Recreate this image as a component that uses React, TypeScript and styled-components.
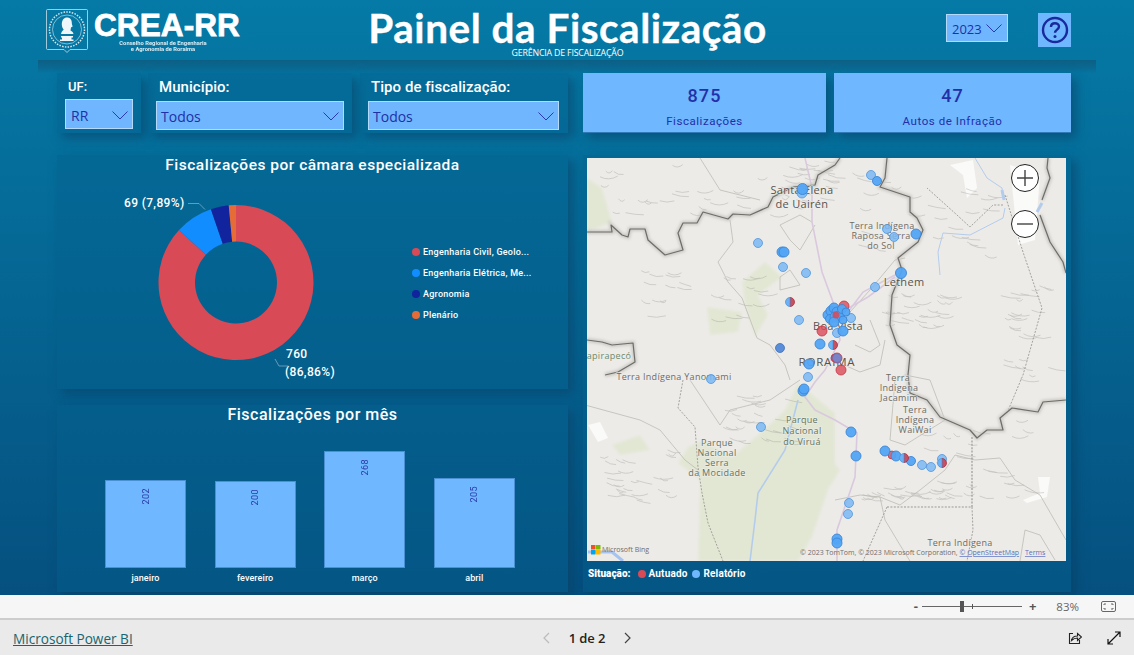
import React from "react";
import styled, { createGlobalStyle } from "styled-components";

const Global = createGlobalStyle`
  html, body { margin: 0; padding: 0; width: 1134px; height: 655px; overflow: hidden; background: #f6f6f6; }
  * { box-sizing: border-box; }
  body { font-family: Roboto, "Liberation Sans", sans-serif; }
`;

const Page = styled.div`width:1134px;height:655px;display:flex;flex-direction:column;`;
const Canvas = styled.main`height:595px;background:linear-gradient(180deg,#057aa6 0%,#05507f 100%);overflow:hidden;`;
const Header = styled.header`height:60px;display:flex;align-items:flex-start;padding-left:46px;`;
const Logo = styled.div`width:195px;height:60px;display:flex;align-items:flex-start;padding-top:9px;`;
const Brand = styled.div`margin-left:6px;margin-top:2px;width:147px;color:#fff;display:flex;flex-direction:column;`;
const BrandName = styled.div`font:900 31.5px/28px "Liberation Sans",sans-serif;letter-spacing:.1px;white-space:nowrap;-webkit-text-stroke:.8px #fff;margin-bottom:1px;`;
const BrandSub = styled.div`font:700 5.8px/6px Roboto,sans-serif;white-space:nowrap;opacity:.85;text-align:center;margin-right:9px;`;
const TitleBlock = styled.div`width:397px;margin-left:128px;display:flex;flex-direction:column;align-items:center;color:#fff;`;
const Title = styled.h1`margin:0;font:700 40.5px/47px Lato,"Open Sans",sans-serif;letter-spacing:.52px;-webkit-text-stroke:.35px #fff;white-space:nowrap;margin-top:4px;height:43px;`;
const Subtitle = styled.div`font:400 8.8px/11px "Open Sans",sans-serif;letter-spacing:-.18px;white-space:nowrap;margin-top:1px;`;
const YearSelect = styled.div`margin-left:180px;margin-top:14px;width:62px;height:28px;background:#6fb6ff;border:1px solid #b5d9fb;display:flex;align-items:center;justify-content:space-between;padding:1px 5px 0 5px;color:#2230a6;font:400 13px "Open Sans",sans-serif;`;
const HelpButton = styled.div`margin-left:30px;margin-top:13px;width:33px;height:34px;background:#6fb7ff;display:flex;align-items:center;justify-content:center;`;
const HeaderStrip = styled.div`height:13px;margin:0 38px;background:linear-gradient(180deg,#0c5f85 0%,#0a6a93 65%,rgba(6,110,150,0) 100%);`;
const Body = styled.div`display:grid;grid-template-columns:511px 488px;column-gap:15px;padding-left:57px;`;
const Column = styled.div`display:flex;flex-direction:column;`;
const FilterRow = styled.div`display:flex;height:60px;margin-bottom:22px;`;
const Panel = styled.section`background:rgba(5,95,140,.42);box-shadow:5px 5px 10px rgba(9,62,98,.55);`;
const FilterPanel = styled(Panel)<{ $w: number; $ml: number; $pl: number; $pr: number }>`
  width:${p => p.$w}px;margin-left:${p => p.$ml}px;padding:0 ${p => p.$pr}px 0 ${p => p.$pl}px;display:flex;flex-direction:column;`;
const FilterLabel = styled.label<{ $h: number; $fs: number }>`
  height:${p => p.$h}px;padding:5px 0 0 3px;color:#fff;font:500 ${p => p.$fs}px/18px Roboto,sans-serif;letter-spacing:.05px;white-space:nowrap;`;
const Select = styled.div<{ $h: number; $fs: number; $pl?: number }>`
  height:${p => p.$h}px;background:#6fb6ff;border:1px solid #b5d9fb;display:flex;align-items:center;justify-content:space-between;padding:2px 4px 0 ${p => p.$pl ?? 4}px;color:#2230a6;font:400 ${p => p.$fs}px "Open Sans",sans-serif;`;
const KpiRow = styled.div`display:flex;gap:8px;height:60px;margin-bottom:22px;`;
const Kpi = styled.div<{ $w: number }>`width:${p => p.$w}px;height:60px;background:#6fb7ff;border-bottom:1px solid #2f79b5;box-shadow:5px 5px 10px rgba(9,62,98,.55);display:flex;flex-direction:column;align-items:center;color:#2330a8;`;
const KpiValue = styled.div`font:500 18px/21px Roboto,sans-serif;letter-spacing:1.1px;margin-top:12px;`;
const KpiLabel = styled.div`font:400 11.5px/14px Roboto,sans-serif;letter-spacing:.55px;margin-top:8px;`;
const ChartPanel = styled(Panel)<{ $h: number; $mt?: number }>`height:${p => p.$h}px;margin-top:${p => p.$mt ?? 0}px;display:flex;flex-direction:column;`;
const ChartTitle = styled.h2<{ $fs: number }>`margin:0;height:20px;text-align:center;color:#fff;font:500 ${p => p.$fs}px/20px Roboto,sans-serif;letter-spacing:.5px;`;
const DonutBody = styled.div`display:flex;`;
const DonutArt = styled.svg`flex:none;`;
const Legend = styled.ul`list-style:none;margin:66px 0 0 0;padding:0;display:flex;flex-direction:column;`;
const LegendItem = styled.li`height:21px;display:flex;align-items:center;gap:3px;color:#fff;font:500 9px/12px Roboto,sans-serif;letter-spacing:.25px;white-space:nowrap;`;
const Dot = styled.span<{ $c: string }>`width:8px;height:8px;border-radius:50%;background:${p => p.$c};flex:none;`;
const BarPlot = styled.div`display:flex;gap:28.6px;padding-left:48px;height:133px;align-items:flex-end;margin-top:10px;`;
const BarWrap = styled.div`width:81px;display:flex;flex-direction:column;`;
const Bar = styled.div`width:81px;background:#6fb7ff;border:1px solid #4b90d3;display:flex;justify-content:center;padding-top:7px;`;
const BarValue = styled.span`writing-mode:vertical-rl;transform:rotate(180deg);color:#2a3aa8;font:400 9px/10px Roboto,sans-serif;letter-spacing:.4px;height:max-content;`;
const AxisRow = styled.div`display:flex;gap:28.6px;padding-left:48px;margin-top:4px;`;
const AxisLabel = styled.div`width:81px;text-align:center;color:#fff;font:500 9px/12px Roboto,sans-serif;letter-spacing:.1px;`;
const MapPanel = styled(Panel)`height:437px;padding:3px 5px 0 4px;`;
const MapFrame = styled.div`position:relative;width:479px;height:403px;overflow:hidden;background:#edebe8;`;
const ZoomCtl = styled.div<{ $top: number }>`position:absolute;left:424px;top:${p => p.$top}px;width:28px;height:28px;border-radius:50%;background:#fff;border:1px solid #222;display:flex;align-items:center;justify-content:center;`;
const MapLegend = styled.div`display:flex;align-items:center;height:26px;padding-left:1px;color:#fff;font:700 10px/12px Roboto,sans-serif;letter-spacing:.15px;`;
const MapLegendKey = styled.span`margin-right:7px;font-weight:900;letter-spacing:0;`;
const MapLegendItem = styled.span`display:flex;align-items:center;gap:3px;margin-right:5px;`;
const ZoomBar = styled.div`height:23px;background:#f6f6f6;display:flex;align-items:center;justify-content:flex-end;padding-right:18px;color:#666;`;
const SliderSign = styled.span`font:700 13px/13px "Open Sans",sans-serif;color:#555;`;
const Slider = styled.div`position:relative;width:100px;height:1px;background:#666;margin:0 7px 0 4px;`;
const Thumb = styled.span`position:absolute;left:38px;top:-5px;width:4px;height:11px;background:#555;`;
const Tick = styled.span`position:absolute;left:50px;top:-2px;width:1px;height:5px;background:#555;`;
const Percent = styled.span`margin:0 22px 0 20px;font:400 11.5px "Open Sans",sans-serif;color:#666;`;
const BottomBar = styled.footer`height:37px;background:#eaeaea;border-top:2px solid #cdcdcd;display:grid;grid-template-columns:1fr auto 1fr;align-items:center;padding:1px 13px 0 13px;`;
const PbiLink = styled.a`font:400 13.6px "Open Sans",sans-serif;letter-spacing:0;color:#17666f;text-decoration:underline;`;
const Pager = styled.div`display:flex;align-items:center;gap:19px;margin-left:40px;font:600 13px "Open Sans",sans-serif;color:#222;letter-spacing:-.1px;`;
const Actions = styled.div`display:flex;justify-content:flex-end;gap:25px;align-items:center;`;
const ChartNum = styled.text`font:500 12px Roboto,sans-serif;fill:#fff;letter-spacing:.35px;`;
const MapText = styled.text`font:400 7px "Open Sans",sans-serif;fill:#6f6e6a;`;
const MapLink = styled.tspan`fill:#5a6fc0;text-decoration:underline;`;
const MapSvg = styled.svg`display:block;`;
const MapLabel = styled.text<{ $fs?: number; $c?: string; $ls?: number }>`
  font: 400 ${p => p.$fs ?? 9}px "Open Sans", sans-serif;
  fill: ${p => p.$c ?? "#6d6b64"};
  letter-spacing: ${p => p.$ls ?? 0.3}px;
  text-anchor: middle;
  paint-order: stroke;
  stroke: rgba(240,238,235,.7);
  stroke-width: 1.5px;
`;

const Chevron = ({ w = 16, h = 9, c = "#2a3ab0" }: { w?: number; h?: number; c?: string }) => (
  <svg width={w} height={h} viewBox="0 0 16 9"><path d="M.5.5 8 8 15.5.5" fill="none" stroke={c} strokeWidth="1" /></svg>
);

const polar = (cx: number, cy: number, r: number, f: number) => {
  const a = f * 2 * Math.PI;
  return [cx + r * Math.sin(a), cy - r * Math.cos(a)];
};
const arc = (from: number, to: number) => {
  const cx = 179, cy = 107.5, R = 77.5, r = 41;
  const [a, b] = polar(cx, cy, R, from), [c, d] = polar(cx, cy, R, to), [e, f] = polar(cx, cy, r, to), [g, h] = polar(cx, cy, r, from);
  const l = to - from > 0.5 ? 1 : 0;
  return `M${a} ${b}A${R} ${R} 0 ${l} 1 ${c} ${d}L${e} ${f}A${r} ${r} 0 ${l} 0 ${g} ${h}Z`;
};

const legend = [
  ["#d84a56", "Engenharia Civil, Geolo..."],
  ["#118dff", "Engenharia Elétrica, Me..."],
  ["#12239e", "Agronomia"],
  ["#e66c37", "Plenário"],
];
const bars = [
  ["janeiro", 202, 88], ["fevereiro", 200, 87], ["março", 268, 117], ["abril", 205, 90],
] as const;

type M = [number, number, number?, number?];
const light: M[] = [[802, 193, 5], [758, 243], [783, 267], [806, 273], [799, 320], [871, 175], [887, 229], [894, 237], [875, 287], [851, 318], [837, 333], [711, 379], [808, 377], [761, 427], [922, 465], [931, 467], [942, 459], [849, 503], [848, 514]];
const solid: M[] = [[782, 252, 5], [784, 252, 5], [820, 344, 5], [809, 364, 5], [877, 181, 4.5], [916, 234, 5], [901, 273, 5.5], [843, 331, 5], [851, 432, 5], [856, 456, 5], [885, 451, 5], [896, 456, 5], [911, 461, 4.5], [837, 539, 5], [837, 543, 5], [803, 391, 5], [804, 389, 5], [802.5, 189, 5.5]];
const cluster: M[] = [[828, 315, 5], [831, 311, 5], [834, 308, 5], [837, 312, 5], [830, 319, 4.5], [835, 317, 5], [839, 316, 5], [842, 309, 4.5], [834, 322, 5], [846, 312, 4], [843, 320, 4]];
const red: M[] = [[822, 331, 5], [844, 306, 5], [837, 316, 5], [835, 358, 4], [837, 358, 5], [841, 370, 5], [892, 455, 4]];
const half: M[] = [[790, 302], [833, 345], [904, 458], [942, 463]];

const shade: string[] = (() => {
  const res: string[] = [];
  let s = 17;
  const rnd = () => (s = (s * 16807) % 2147483647) / 2147483647;
  const zones = [[600, 165, 190, 50], [640, 270, 120, 50], [850, 170, 140, 90], [880, 290, 70, 40], [900, 420, 130, 80], [860, 480, 90, 20], [720, 395, 70, 50], [600, 450, 70, 50], [1000, 280, 50, 100], [780, 160, 50, 50]];
  zones.forEach(([x, y, w, h]) => {
    for (let i = 0; i < 26; i++) {
      const a = x + rnd() * w, b = y + rnd() * h, l = 6 + rnd() * 14;
      res.push(`M${a.toFixed(1)} ${b.toFixed(1)}q${(l / 2).toFixed(1)} ${(2 + rnd() * 3).toFixed(1)} ${l.toFixed(1)} ${(rnd() * 5 - 1).toFixed(1)}`);
    }
  });
  return res;
})();

const borderA = "M587 232 612 232 611 225 622 235 628 237 630 229 645 229 648 240 665 255 683 250 678 233 683 223 697 223 703 212 728 219 733 214 750 215 768 207 773 197 793 187 815 185 818 175 835 165 840 158";
const borderB = "M887 158 885 178 880 187 910 197 910 212 917 218 923 230 918 242 898 258 902 270 892 295 890 325 897 345 910 355 908 375 910 393 927 400 940 417 970 430 977 438 987 430 1003 430 1000 418 1012 408 1038 412 1043 402 1066 400";
const borderC = "M1048 158 1047 168 1050 178 1042 200 M1040 215 1050 242 1063 262 1066 273";
const borderD = "M587 340 602 342 612 345 633 343 635 362 618 372 605 375";

const MapArt = () => (
  <MapSvg width="479" height="403" viewBox="587 158 479 403">
    <defs>
      <filter id="soft"><feGaussianBlur stdDeviation="1.4" /></filter>
      <filter id="soft2"><feGaussianBlur stdDeviation=".5" /></filter>
      <filter id="soft3"><feGaussianBlur stdDeviation="1.6" /></filter>
    </defs>
    <rect x="587" y="158" width="479" height="403" fill="#edebe8" />
    <g fill="#e2e7d4" filter="url(#soft)">
      <path d="M798 383 835 413 835 470 812 537 798 561 698 561 700 480 678 463 688 447 702 440 732 457 758 435 785 410Z" />
      <path d="M587 178 602 188 612 222 587 232Z" />
      <path d="M707 307 742 312 738 332 710 335Z" />
      <path d="M742 282 765 262 782 277 758 295 768 315 755 337 745 305Z" />
      <path d="M830 457 840 470 830 487Z" />
      <path d="M612 445 640 435 650 450 620 455Z" />
    </g>
    <g fill="#fafaf9" filter="url(#soft2)">
      <path d="M950 165 973 160 977 188 967 198 963 175Z" />
      <path d="M1023 500 1040 493 1038 477 1050 477 1047 497 1027 503Z" />
      <path d="M1010 165 1040 175 1035 240 1018 245Z" />
      <path d="M588 425 600 422 608 438 598 442Z" />
    </g>
    <g fill="none" stroke="#8d8c86" strokeWidth=".7" opacity=".45" filter="url(#soft2)">
      {shade.map((d, i) => <path key={i} d={d} />)}
    </g>
    <g fill="none" stroke="#bcbbb3" strokeWidth=".8">
      <path d="M730 220 733 242 718 262 728 282 742 298 757 338 770 345 785 365 790 380" />
      <path d="M812 222 800 215 780 225 790 240 800 250 815 225" />
      <path d="M780 277 790 270 800 285 780 290Z" />
      <path d="M850 312 870 290 895 260 905 258" />
      <path d="M870 320 880 345 870 352 855 345" />
      <path d="M895 380 905 375 930 380 945 420 905 445 890 440Z" />
      <path d="M880 497 900 505 920 490 945 470 955 455 975 460 1000 458 1015 480 1040 495 1066 540" />
      <path d="M835 500 860 495 880 497 885 520 900 545 910 561" />
      <path d="M1020 561 1025 530 1040 535 1055 560" />
      <path d="M585 405 640 420 660 430 685 460 698 470" />
      <path d="M690 380 720 425 730 410 770 400 800 380" />
      <path d="M700 158 720 190 760 200" />
      <path d="M835 361 860 372 880 365 885 340" />
    </g>
    <g fill="none" stroke="#d9c9de" strokeWidth="1.6">
      <path d="M805 158 812 188 812 222 822 272 833 302 840 340 825 370 815 382 805 397 815 410 835 420 857 433 855 477 837 530 837 561" />
      <path d="M848 312 863 292 895 275" />
      <path d="M845 310 868 297 895 277" />
    </g>
    <g fill="none" stroke="#b4ccec" strokeWidth="1">
      <path d="M975 158 987 178 1002 188 1003 198" />
      <path d="M943 233 970 235 1003 218 1005 208" />
      <path d="M943 233 938 252 940 275" />
      <path d="M1002 190 1004 200" strokeWidth="3" />
      <path d="M1042 203 1037 212" strokeWidth="3" />
      <path d="M798 400 785 450 758 493 755 520 750 561" strokeWidth="1.6" />
      <path d="M588 552 612 552 623 561" strokeWidth="3" stroke="#a7c4f0" />
    </g>
    <g fill="none" stroke="#9a9993" strokeWidth=".9" strokeDasharray="2 1.4">
      <path d="M683 380 678 408 695 427 698 467 702 493 708 523 723 561" />
      <path d="M887 507 972 507 972 437" strokeWidth="1.2" />
      <path d="M972 507 973 530 967 561" />
      <path d="M887 507 863 561" />
      <path d="M1003 205 993 205 970 227 957 215 927 188" />
      <path d="M1005 195 1023 252 1042 308 1023 375 1007 413" />
    </g>
    <g fill="none" stroke="#c9c8c2" strokeWidth="4" filter="url(#soft3)">
      <path d={borderA} /><path d={borderB} /><path d={borderC} /><path d={borderD} />
    </g>
    <g fill="none" stroke="#6e6d69" strokeWidth="1.2" strokeLinejoin="round">
      <path d={borderA} /><path d={borderB} /><path d={borderC} /><path d={borderD} />
    </g>

    <MapLabel x="802" y="194" $fs={11} $c="#55534e">Santa Elena</MapLabel>
    <MapLabel x="802" y="208" $fs={11} $c="#55534e">de Uairén</MapLabel>
    <MapLabel x="904" y="286" $fs={11} $c="#55534e">Lethem</MapLabel>
    <MapLabel x="882" y="229">Terra Indígena</MapLabel>
    <MapLabel x="881" y="239">Raposa Serra</MapLabel>
    <MapLabel x="881" y="249">do Sol</MapLabel>
    <MapLabel x="838" y="330" $fs={11} $c="#55534e">Boa Vista</MapLabel>
    <MapLabel x="827" y="366" $fs={11.5} $c="#55534e" $ls={.8}>RORAIMA</MapLabel>
    <MapLabel x="609" y="359" $c="#6a8a6e">apirapecó</MapLabel>
    <MapLabel x="674" y="380">Terra Indígena Yanomami</MapLabel>
    <MapLabel x="802" y="423" $c="#5f7560">Parque</MapLabel>
    <MapLabel x="802" y="434" $c="#5f7560">Nacional</MapLabel>
    <MapLabel x="802" y="445" $c="#5f7560">do Viruá</MapLabel>
    <MapLabel x="717" y="446" $c="#5f7560">Parque</MapLabel>
    <MapLabel x="717" y="456" $c="#5f7560">Nacional</MapLabel>
    <MapLabel x="717" y="466" $c="#5f7560">Serra</MapLabel>
    <MapLabel x="717" y="476" $c="#5f7560">da Mocidade</MapLabel>
    <MapLabel x="898" y="381">Terra</MapLabel>
    <MapLabel x="899" y="391">Indígena</MapLabel>
    <MapLabel x="899" y="401">Jacamim</MapLabel>
    <MapLabel x="915" y="413">Terra</MapLabel>
    <MapLabel x="915" y="423">Indígena</MapLabel>
    <MapLabel x="915" y="433">WaiWai</MapLabel>
    <MapLabel x="960" y="546">Terra Indígena</MapLabel>

    <g fill="#d84a56" fillOpacity=".8" stroke="#c8323f" strokeWidth=".8">
      {red.map(([x, y, r = 5], i) => <circle key={i} cx={x} cy={y} r={r} />)}
    </g>
    <g fill="#7ab8f5" fillOpacity=".85" stroke="#4f96dc" strokeWidth=".8">
      {light.map(([x, y, r = 4.5], i) => <circle key={i} cx={x} cy={y} r={r} />)}
    </g>
    <g fill="#53a5f5" fillOpacity=".95" stroke="#3c86d6" strokeWidth=".9">
      {solid.map(([x, y, r = 5], i) => <circle key={i} cx={x} cy={y} r={r} />)}
      {cluster.map(([x, y, r = 5], i) => <circle key={i} cx={x} cy={y} r={r} />)}
    </g>
    <circle cx="780" cy="348" r="4.5" fill="#5a8ed8" stroke="#3f70b8" strokeWidth=".8" />
    <circle cx="837" cy="358" r="4.5" fill="#7a82c8" stroke="#6a70b4" strokeWidth=".8" />
    <circle cx="836" cy="315" r="3.5" fill="#d84a56" fillOpacity=".85" />
    {half.map(([x, y], i) => (
      <g key={i} strokeWidth=".8">
        <path d={`M${x} ${y - 4.5}a4.5 4.5 0 0 1 0 9Z`} fill="#c8505f" stroke="#a83040" />
        <path d={`M${x} ${y - 4.5}a4.5 4.5 0 0 0 0 9Z`} fill="#6cb0f5" stroke="#4f96dc" />
      </g>
    ))}

    <rect x="591" y="545" width="4.5" height="4.5" fill="#f25022" />
    <rect x="596" y="545" width="4.5" height="4.5" fill="#7fba00" />
    <rect x="591" y="550" width="4.5" height="4.5" fill="#00a4ef" />
    <rect x="596" y="550" width="4.5" height="4.5" fill="#ffb900" />
    <MapText x="602" y="552">Microsoft Bing</MapText>
    <MapText x="800" y="555">© 2023 TomTom, © 2023 Microsoft Corporation, <MapLink>© OpenStreetMap</MapLink>  <MapLink dx="4">Terms</MapLink></MapText>
  </MapSvg>
);

export default function App() {
  return (
    <Page>
      <Global />
      <Canvas>
        <Header>
          <Logo>
            <svg width="42" height="46" viewBox="0 0 42 46">
              <path d="M1.5.5h39a1 1 0 0 1 1 1v38a1 1 0 0 1-1 1H24l-3 3-3-3H1.5a1 1 0 0 1-1-1v-38a1 1 0 0 1 1-1Z" fill="none" stroke="#c9e0ea" strokeWidth=".8" />
              <circle cx="21" cy="20.5" r="17.5" fill="none" stroke="#d5e7ef" strokeWidth="1.5" strokeDasharray="1.5 1.3" />
              <circle cx="21" cy="20.5" r="14.5" fill="none" stroke="#d5e7ef" strokeWidth=".6" />
              <path d="M21 8.5c3 0 4.800 2.300 4.800 5 0 1.600.3 2.600 1 3.800l-1.800 1.300-.5 2.900c1.800.8 2.800 1.900 3 3.500H15c.2-2.100 1.500-3.300 2.700-4.300-1-1.500-1.900-3-1.900-5.500 0-4 2.200-6.700 5.200-6.700Z" fill="#eef6f9" />
              <path d="M15 27h12v1.500h-1.500v2h2v1.500H14v-1.500h2v-2H15Z" fill="#eef6f9" />
            </svg>
            <Brand>
              <BrandName>CREA-RR</BrandName>
              <BrandSub>Conselho Regional de Engenharia</BrandSub>
              <BrandSub>e Agronomia de Roraima</BrandSub>
            </Brand>
          </Logo>
          <TitleBlock>
            <Title>Painel da Fiscalização</Title>
            <Subtitle>GERÊNCIA DE FISCALIZAÇÃO</Subtitle>
          </TitleBlock>
          <YearSelect>2023 <Chevron /></YearSelect>
          <HelpButton>
            <svg width="28" height="28" viewBox="0 0 28 28">
              <circle cx="14" cy="14" r="12" fill="none" stroke="#1a2a9c" strokeWidth="2.4" />
              <path d="M10 11c0-2.500 1.800-3.800 4-3.800s4 1.400 4 3.400c0 3-4 3-4 6.200" fill="none" stroke="#1a2a9c" strokeWidth="2.4" />
              <circle cx="14" cy="20.5" r="1.5" fill="#1a2a9c" />
            </svg>
          </HelpButton>
        </Header>
        <HeaderStrip />
        <Body>
          <Column>
            <FilterRow>
              <FilterPanel $w={84} $ml={0} $pl={8} $pr={8}>
                <FilterLabel $h={26} $fs={13}>UF:</FilterLabel>
                <Select $h={30} $fs={14} $pl={5}>RR <Chevron /></Select>
              </FilterPanel>
              <FilterPanel $w={204} $ml={7} $pl={8} $pr={8}>
                <FilterLabel $h={28} $fs={15}>Município:</FilterLabel>
                <Select $h={29} $fs={14}>Todos <Chevron /></Select>
              </FilterPanel>
              <FilterPanel $w={208} $ml={8} $pl={8} $pr={9}>
                <FilterLabel $h={28} $fs={15}>Tipo de fiscalização:</FilterLabel>
                <Select $h={29} $fs={14}>Todos <Chevron /></Select>
              </FilterPanel>
            </FilterRow>
            <ChartPanel $h={234}>
              <ChartTitle $fs={15.5}>Fiscalizações por câmara especializada</ChartTitle>
              <DonutBody>
                <DonutArt width="355" height="214" viewBox="0 0 355 214">
                  <path d={arc(0, 0.8686)} fill="#d84a56" />
                  <path d={arc(0.8686, 0.9475)} fill="#118dff" />
                  <path d={arc(0.9475, 0.985)} fill="#12239e" />
                  <path d={arc(0.985, 1)} fill="#e66c37" />
                  <path d="M131 28.5h11l6 6" fill="none" stroke="#7fa8c0" strokeWidth=".8" />
                  <path d="M218 184l4 7h9" fill="none" stroke="#7fa8c0" strokeWidth=".8" />
                  <ChartNum x="67" y="32">69 (7,89%)</ChartNum>
                  <ChartNum x="229" y="183">760</ChartNum>
                  <ChartNum x="228" y="201">(86,86%)</ChartNum>
                </DonutArt>
                <Legend>
                  {legend.map(([c, t]) => <LegendItem key={t}><Dot $c={c} />{t}</LegendItem>)}
                </Legend>
              </DonutBody>
            </ChartPanel>
            <ChartPanel $h={187} $mt={16}>
              <ChartTitle $fs={16}>Fiscalizações por mês</ChartTitle>
              <BarPlot>
                {bars.map(([m, v, h]) => (
                  <BarWrap key={m}>
                    <Bar style={{ height: h }}><BarValue>{v}</BarValue></Bar>
                  </BarWrap>
                ))}
              </BarPlot>
              <AxisRow>
                {bars.map(([m]) => <AxisLabel key={m}>{m}</AxisLabel>)}
              </AxisRow>
            </ChartPanel>
          </Column>
          <Column>
            <KpiRow>
              <Kpi $w={243}><KpiValue>875</KpiValue><KpiLabel>Fiscalizações</KpiLabel></Kpi>
              <Kpi $w={237}><KpiValue>47</KpiValue><KpiLabel>Autos de Infração</KpiLabel></Kpi>
            </KpiRow>
            <MapPanel>
              <MapFrame>
                <MapArt />
                <ZoomCtl $top={6}>
                  <svg width="18" height="18" viewBox="0 0 18 18"><path d="M1 9h16M9 1v16" stroke="#444" strokeWidth="1.4" /></svg>
                </ZoomCtl>
                <ZoomCtl $top={52}>
                  <svg width="18" height="18" viewBox="0 0 18 18"><path d="M1 9h16" stroke="#444" strokeWidth="1.4" /></svg>
                </ZoomCtl>
              </MapFrame>
              <MapLegend>
                <MapLegendKey>Situação:</MapLegendKey>
                <MapLegendItem><Dot $c="#d84a56" />Autuado</MapLegendItem>
                <MapLegendItem><Dot $c="#6fb7ff" />Relatório</MapLegendItem>
              </MapLegend>
            </MapPanel>
          </Column>
        </Body>
      </Canvas>
      <ZoomBar>
        <SliderSign>-</SliderSign>
        <Slider><Thumb /><Tick /></Slider>
        <SliderSign>+</SliderSign>
        <Percent>83%</Percent>
        <svg width="15" height="11" viewBox="0 0 15 11">
          <rect x=".5" y=".5" width="14" height="10" rx="1.5" fill="none" stroke="#666" />
          <path d="M3 4V3h2M12 4V3h-2M3 7v1h2M12 7v1h-2" fill="none" stroke="#666" />
        </svg>
      </ZoomBar>
      <BottomBar>
        <PbiLink>Microsoft Power BI</PbiLink>
        <Pager>
          <svg width="8" height="12" viewBox="0 0 8 12"><path d="M7 1 2 6l5 5" fill="none" stroke="#bbb" strokeWidth="1.2" /></svg>
          <span>1 de 2</span>
          <svg width="8" height="12" viewBox="0 0 8 12"><path d="m1 1 5 5-5 5" fill="none" stroke="#444" strokeWidth="1.2" /></svg>
        </Pager>
        <Actions>
          <svg width="14" height="14" viewBox="0 0 14 14">
            <path d="M5 2.5H1.500v10h10V9" fill="none" stroke="#222" strokeWidth="1.1" />
            <path d="M3.500 9.500c.5-3 3-4.500 6-4.500V2.500l4 3.500-4 3.500V7c-2.500 0-4.500 1-6 2.500Z" fill="none" stroke="#222" strokeWidth="1.1" />
          </svg>
          <svg width="14" height="14" viewBox="0 0 14 14">
            <path d="M1 13 13 1M8 1h5v5M1 8v5h5" fill="none" stroke="#111" strokeWidth="1.2" />
          </svg>
        </Actions>
      </BottomBar>
    </Page>
  );
}
